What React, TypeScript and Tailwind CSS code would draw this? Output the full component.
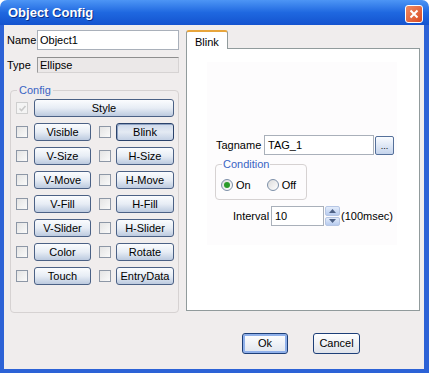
import React from "react";

const font = { fontFamily: '"Liberation Sans", Arial, sans-serif' };

const CfgButton = ({ label, w, pressed }: { label: string; w: string; pressed?: boolean }) => (
  <div
    className={`${w} h-[18px] rounded-[3px] border flex items-center justify-center text-[11px] leading-none text-black ${
      pressed
        ? "border-[#2a426b] bg-gradient-to-b from-[#cdd8ea] via-[#e4eaf3] to-[#c3d0e4] shadow-[inset_1px_1px_0_#8ea2c2]"
        : "border-[#4b6185] bg-gradient-to-b from-[#fbfcfe] via-[#e7edf5] to-[#bccadf]"
    }`}
  >
    {label}
  </div>
);

const Check = ({ disabled }: { disabled?: boolean }) => (
  <div
    className={`w-[12px] h-[12px] shrink-0 border flex items-center justify-center ${
      disabled ? "border-[#cfcfcf] bg-[#f4f4f4]" : "border-[#8d97a6] bg-gradient-to-br from-[#e4e4e4] to-[#fafafa]"
    }`}
  >
    {disabled && (
      <svg width="9" height="9" viewBox="0 0 9 9">
        <path d="M1.5 4.5 L3.5 6.5 L7.5 2" stroke="#c9c9c9" strokeWidth="1.6" fill="none" />
      </svg>
    )}
  </div>
);

const Radio = ({ on }: { on?: boolean }) => (
  <div className="w-[12px] h-[12px] rounded-full border border-[#7c8fa8] bg-gradient-to-br from-[#dcdcdc] to-white flex items-center justify-center">
    {on && <div className="w-[6px] h-[6px] rounded-full bg-[#2a9a2a]" />}
  </div>
);

const pairs = [
  ["Visible", "Blink"],
  ["V-Size", "H-Size"],
  ["V-Move", "H-Move"],
  ["V-Fill", "H-Fill"],
  ["V-Slider", "H-Slider"],
  ["Color", "Rotate"],
  ["Touch", "EntryData"],
];

export default function App() {
  return (
    <div className="w-[429px] h-[373px] flex flex-col bg-white text-[11px] text-black" style={font}>
      {/* Title bar */}
      <div className="h-[25px] shrink-0 rounded-t-[7px] bg-gradient-to-b from-[#4d95f5] via-[#1f68e0] to-[#1453cf] flex items-center justify-between pl-[8px] pr-[6px]">
        <span className="text-white font-bold text-[13px] [text-shadow:1px_1px_0_#0a2f8a]">Object Config</span>
        <div className="w-[18px] h-[18px] mt-[3px] rounded-[3px] border border-white bg-gradient-to-br from-[#f08a62] to-[#d8491f] flex items-center justify-center">
          <svg width="10" height="10" viewBox="0 0 10 10">
            <path d="M1.5 1.5 L8.5 8.5 M8.5 1.5 L1.5 8.5" stroke="white" strokeWidth="2" />
          </svg>
        </div>
      </div>

      {/* Body */}
      <div className="flex-1 flex flex-col bg-[#f0eded] border-l-[4px] border-r-[5px] border-b-[4px] border-[#2c62d6]">
        <div className="flex">
          {/* Left column */}
          <div className="w-[172px] ml-[3px] flex flex-col">
            <div className="mt-[5px] h-[20px] flex items-center">
              <span className="w-[30px]">Name</span>
              <div className="flex-1 h-full bg-white border border-[#a9b0ba] flex items-center pl-[2px]">Object1</div>
            </div>
            <div className="mt-[7px] h-[16px] flex items-center">
              <span className="w-[30px]">Type</span>
              <div className="flex-1 h-full bg-[#ebe8e8] border border-[#d6d3d3] border-t-[#8e8e8e] border-l-[#9a9a9a] flex items-center pl-[2px]">Ellipse</div>
            </div>
            <fieldset className="mt-[11px] ml-[3px] w-[169px] h-[229px] rounded-[4px] border border-[#d6d2d2] px-0">
              <legend className="ml-[6px] px-[2px] text-[11px] leading-[12px] text-[#3a64c4]">Config</legend>
              <div className="pt-[3px] flex flex-col gap-[6px]">
                <div className="flex items-center ml-[5px] gap-[6px]">
                  <Check disabled />
                  <CfgButton label="Style" w="w-[140px]" />
                </div>
                {pairs.map(([a, b]) => (
                  <div key={a} className="flex items-center ml-[5px]">
                    <Check />
                    <div className="ml-[6px]">
                      <CfgButton label={a} w="w-[57px]" />
                    </div>
                    <div className="ml-[8px]">
                      <Check />
                    </div>
                    <div className="ml-[5px]">
                      <CfgButton label={b} w="w-[58px]" pressed={b === "Blink"} />
                    </div>
                  </div>
                ))}
              </div>
            </fieldset>
          </div>

          {/* Right column */}
          <div className="ml-[7px] w-[234px] flex flex-col">
            <div className="mt-[5px] h-[19px] flex">
              <div className="relative z-10 w-[42px] h-[19px] bg-white border border-b-0 border-[#919b9c] border-t-[#e8a53b] border-t-2 rounded-t-[3px] pl-[8px] pt-[2px]">
                Blink
              </div>
            </div>
            <div className="-mt-[1px] h-[263px] bg-white border border-[#919b9c]">
              <div className="mt-[13px] ml-[20px] w-[190px] h-[183px] bg-[#fdfcfd] flex flex-col">
                <div className="mt-[73px] h-[20px] flex items-center">
                  <span className="ml-[9px] w-[48px]">Tagname</span>
                  <div className="w-[110px] h-full bg-white border border-[#a9b0ba] flex items-center pl-[3px]">TAG_1</div>
                  <div className="ml-[1px] w-[19px] h-[19px] rounded-[2px] border border-[#55709a] bg-gradient-to-b from-[#fafcff] to-[#c5d4ec] flex items-end justify-center pb-[3px] text-[9px] leading-none">
                    ...
                  </div>
                </div>
                <fieldset className="mt-[3px] ml-[8px] w-[92px] h-[42px] rounded-[4px] border border-[#d6d2d2] px-0">
                  <legend className="ml-[6px] px-[1px] text-[11px] leading-[12px] text-[#3a64c4]">Condition</legend>
                  <div className="mt-[7px] ml-[5px] flex items-center">
                    <Radio on />
                    <span className="ml-[3px]">On</span>
                    <div className="ml-[16px]">
                      <Radio />
                    </div>
                    <span className="ml-[3px]">Off</span>
                  </div>
                </fieldset>
                <div className="mt-[6px] h-[20px] flex items-center">
                  <span className="ml-[26px] w-[38px]">Interval</span>
                  <div className="w-[53px] h-full bg-white border border-[#a9b0ba] flex items-center pl-[3px]">10</div>
                  <div className="w-[16px] h-full flex flex-col gap-[1px] pl-[1px]">
                    <div className="flex-1 rounded-[2px] bg-gradient-to-b from-[#e3ecfb] to-[#b7cbee] border border-[#b6c6e4] flex items-center justify-center">
                      <svg width="7" height="4" viewBox="0 0 7 4"><path d="M0 4 L3.5 0 L7 4Z" fill="#4d6185" /></svg>
                    </div>
                    <div className="flex-1 rounded-[2px] bg-gradient-to-b from-[#e3ecfb] to-[#b7cbee] border border-[#b6c6e4] flex items-center justify-center">
                      <svg width="7" height="4" viewBox="0 0 7 4"><path d="M0 0 L3.5 4 L7 0Z" fill="#4d6185" /></svg>
                    </div>
                  </div>
                  <span className="ml-[1px]">(100msec)</span>
                </div>
              </div>
            </div>
          </div>
        </div>

        {/* Buttons */}
        <div className="mt-[20px] pl-[238px] flex items-center">
          <div className="w-[46px] h-[21px] rounded-[3px] border border-[#1d3f78] bg-gradient-to-b from-[#ffffff] to-[#dfe5ee] shadow-[inset_0_0_0_2px_#8fb0ea] flex items-center justify-center">
            Ok
          </div>
          <div className="ml-[25px] w-[47px] h-[21px] rounded-[3px] border border-[#1d3f78] bg-gradient-to-b from-[#ffffff] to-[#dfe3ea] flex items-center justify-center">
            Cancel
          </div>
        </div>
      </div>
    </div>
  );
}
